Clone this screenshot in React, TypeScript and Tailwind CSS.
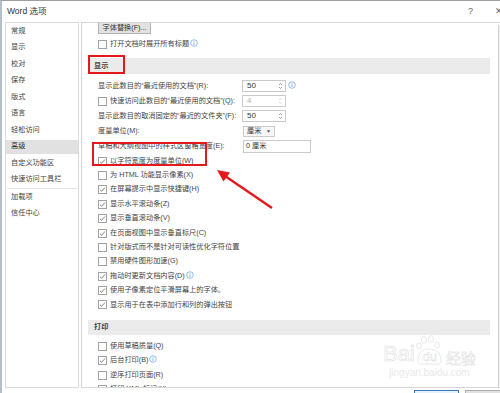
import React from 'react'

const navItems = ['常规', '显示', '校对', '保存', '版式', '语言', '轻松访问', '高级', '自定义功能区', '快速访问工具栏']

const displayChecks: { label: string; checked: boolean; info?: boolean }[] = [
  { label: '以字符宽度为度量单位(W)', checked: true },
  { label: '为 HTML 功能显示像素(X)', checked: false },
  { label: '在屏幕提示中显示快捷键(H)', checked: true },
  { label: '显示水平滚动条(Z)', checked: true },
  { label: '显示垂直滚动条(V)', checked: true },
  { label: '在页面视图中显示垂直标尺(C)', checked: true },
  { label: '针对版式而不是针对可读性优化字符位置', checked: false },
  { label: '禁用硬件图形加速(G)', checked: false },
  { label: '拖动时更新文档内容(D)', checked: true, info: true },
  { label: '使用子像素定位平滑屏幕上的字体。', checked: true },
  { label: '显示用于在表中添加行和列的弹出按钮', checked: true },
]

const printChecks: { label: string; checked: boolean; info?: boolean }[] = [
  { label: '使用草稿质量(Q)', checked: false },
  { label: '后台打印(B)', checked: true, info: true },
  { label: '逆序打印页面(R)', checked: false },
  { label: '打印 XML 标记(X)', checked: false },
]

// 复选框
const Box = ({ checked }: { checked?: boolean }) => (
  <span className="w-[9px] h-[9px] border border-[#a3a3a3] bg-white flex items-center justify-center shrink-0">
    {checked && (
      <svg width="7" height="7" viewBox="0 0 7 7">
        <path d="M1 3.7 L2.7 5.3 L6 1.5" fill="none" stroke="#666" strokeWidth="0.8" />
      </svg>
    )}
  </span>
)

// 信息图标
const Info = ({ className }: { className?: string }) => (
  <svg width="8" height="8" viewBox="0 0 8 8" className={`shrink-0 -mt-[3px] ${className ?? ''}`}>
    <circle cx="4" cy="4" r="3.3" fill="none" stroke="#6aa0d8" strokeWidth="0.7" />
    <line x1="4" y1="3.4" x2="4" y2="6" stroke="#6aa0d8" strokeWidth="0.8" />
    <circle cx="4" cy="2.2" r="0.5" fill="#6aa0d8" />
  </svg>
)

const Spin = ({ value, disabled }: { value: string; disabled?: boolean }) => (
  <div className="w-[44px] h-[12px] border border-[#c9c9c9] bg-white flex items-center justify-between pl-[4px] pr-[2px]">
    <span className={`text-[8px] leading-none ${disabled ? 'text-[#b0b0b0]' : 'text-[#333]'}`}>{value}</span>
    <svg width="5" height="8" viewBox="0 0 5 8">
      <path d="M1 3 L2.5 1.5 L4 3" fill="none" stroke={disabled ? '#c8c8c8' : '#777'} strokeWidth="0.7" />
      <path d="M1 5 L2.5 6.5 L4 5" fill="none" stroke={disabled ? '#c8c8c8' : '#777'} strokeWidth="0.7" />
    </svg>
  </div>
)

const CheckRow = ({ label, checked, info }: { label: string; checked: boolean; info?: boolean }) => (
  <div className="h-[14.4px] shrink-0 flex items-center pl-[10px] gap-[3px]">
    <Box checked={checked} />
    <span className="whitespace-nowrap">{label}</span>
    {info && <Info className="-ml-[2px]" />}
  </div>
)

const Section = ({ title, className }: { title: string; className?: string }) => (
  <div className={`shrink-0 bg-[#ebebeb] flex items-center pl-[6px] font-semibold text-[#444] ${className ?? ''}`}>
    {title}
  </div>
)

export default function App() {
  return (
    <div className="w-[500px] h-[393px] relative overflow-hidden bg-white border-t border-t-[#9e9e9e] border-l-2 border-l-[#b5bfc9] flex flex-col font-['Liberation_Sans','Noto_Sans_CJK_SC',sans-serif] text-[7.2px] text-[#444]">
      {/* 标题栏 */}
      <div className="h-[21px] shrink-0 flex items-center justify-between pl-[5px]">
        <span className="text-[8.5px] text-[#333]">Word 选项</span>
        <div className="flex items-center gap-[22px] text-[#666] text-[9px]">
          <span>?</span>
          <span className="-mr-[3px]">✕</span>
        </div>
      </div>

      <div className="flex h-[366px] shrink-0">
        {/* 左侧导航 */}
        <div className="ml-[3px] w-[74px] shrink-0 border border-[#dadada] flex flex-col">
          {navItems.map(item => (
            <div key={item} className="h-[16.5px] shrink-0 flex items-center">
              <div className={`w-full h-[14px] flex items-center pl-[5px] ${item === '高级' ? 'bg-[#e1e1e1] text-[#333]' : ''}`}>
                {item}
              </div>
            </div>
          ))}
          <div className="h-px bg-[#e4e4e4] mx-[1px] shrink-0" />
          {['加载项', '信任中心'].map(item => (
            <div key={item} className="h-[16.5px] shrink-0 flex items-center pl-[5px]">
              {item}
            </div>
          ))}
        </div>

        {/* 右侧内容 */}
        <div className="ml-[2px] flex-1 flex border-l border-t border-b border-[#d6d6d6] overflow-hidden">
          <div className="flex-1 flex flex-col pl-[6px] pr-[8px] overflow-hidden">
            <div className="-mt-[3px] ml-[10px] w-[53px] h-[14px] shrink-0 bg-[#e1e1e1] border border-[#b4b4b4] flex items-center justify-center pt-[2px] leading-none text-[#333]">
              字体替换(F)...
            </div>
            <div className="mt-[3px]">
              <CheckRow label="打开文档时展开所有标题" checked={false} info />
            </div>

            <Section title="显示" className="mt-[7px] h-[16px]" />

            <div className="mt-[4.5px] flex flex-col">
              <div className="h-[15px] flex items-center pl-[10px]">
                <span className="w-[144px] shrink-0 whitespace-nowrap">显示此数目的“最近使用的文档”(R):</span>
                <Spin value="50" />
                <Info className="ml-[2px]" />
              </div>
              <div className="h-[15px] flex items-center pl-[10px]">
                <div className="w-[144px] shrink-0 flex items-center gap-[3px] whitespace-nowrap">
                  <Box />
                  <span>快速访问此数目的“最近使用的文档”(Q):</span>
                </div>
                <Spin value="4" disabled />
              </div>
              <div className="h-[15px] flex items-center pl-[10px]">
                <span className="w-[144px] shrink-0 whitespace-nowrap">显示此数目的取消固定的“最近的文件夹”(F):</span>
                <Spin value="50" />
              </div>
              <div className="h-[15px] flex items-center pl-[10px]">
                <span className="w-[145px] shrink-0 whitespace-nowrap">度量单位(M):</span>
                <div className="w-[32px] h-[11px] border border-[#cbcbcb] bg-[#f7f7f7] flex items-center justify-between pl-[3px] pr-[3px] text-[#333]">
                  <span>厘米</span>
                  <span className="text-[5px] text-[#555]">▼</span>
                </div>
              </div>
              <div className="h-[15px] flex items-center pl-[10px]">
                <span className="w-[145px] shrink-0 whitespace-nowrap overflow-hidden">草稿和大纲视图中的样式区窗格宽度(E):</span>
                <div className="w-[68px] h-[13px] border border-[#cbcbcb] bg-white flex items-center pl-[2px] text-[#333]">
                  0 厘米
                </div>
              </div>
            </div>

            <div className="flex flex-col">
              {displayChecks.map(c => (
                <CheckRow key={c.label} {...c} />
              ))}
            </div>

            <Section title="打印" className="mt-[8px] h-[15px]" />

            <div className="mt-[4px] flex flex-col">
              {printChecks.map(c => (
                <CheckRow key={c.label} {...c} />
              ))}
            </div>
          </div>
          <div className="w-[2px] shrink-0 mt-[2px] border-l border-[#cfcfcf] bg-[#f2f2f2]" />
        </div>
      </div>

      {/* 底部按钮 */}
      <div className="flex-1 flex items-start justify-end gap-[6px] pt-[2px]">
        <div className="w-[45px] h-[14px] bg-[#e5f1fb] border border-[#3c78b5]" />
        <div className="w-[45px] h-[14px] bg-[#e1e1e1] border border-[#adadad] -mr-[10px]" />
      </div>

      {/* 红色标注 */}
      <div className="absolute left-[86px] top-[54px] w-[37px] h-[19px] border-2 border-[#e3191c]" />
      <div className="absolute left-[90px] top-[141px] w-[115px] h-[24px] border-2 border-[#e3191c]" />
      <svg className="absolute left-0 top-0" width="500" height="393" viewBox="-2 -1 500 393">
        <line x1="268" y1="206" x2="221" y2="174" stroke="#e3191c" strokeWidth="2.4" />
        <polygon points="213,168 226,170.5 219.5,179.5" fill="#e3191c" />
      </svg>

      {/* 水印 */}
      <div className="absolute left-[381px] top-[334px] flex flex-col items-center font-['Liberation_Sans',sans-serif]">
        <div className="flex items-end">
          <span className="text-[22px] leading-none text-white [-webkit-text-stroke:0.6px_#e0e0e0]">Bai</span>
          <div className="relative w-[30px] h-[30px] flex items-end justify-center">
            <svg className="absolute left-0 top-0" width="30" height="30" viewBox="0 0 30 30">
              <ellipse cx="9" cy="5" rx="2.6" ry="3.4" fill="none" stroke="#e2e2e2" strokeWidth="0.8" />
              <ellipse cx="16" cy="4" rx="2.6" ry="3.4" fill="none" stroke="#e2e2e2" strokeWidth="0.8" />
              <ellipse cx="4" cy="11" rx="2.4" ry="3" fill="none" stroke="#e2e2e2" strokeWidth="0.8" />
              <ellipse cx="22" cy="10" rx="2.4" ry="3" fill="none" stroke="#e2e2e2" strokeWidth="0.8" />
              <path d="M3 26 Q3 14 14 14 Q26 14 26 26 Q26 30 20 29 L8 29 Q3 30 3 26 Z" fill="none" stroke="#e2e2e2" strokeWidth="0.8" />
            </svg>
            <span className="relative text-[13px] leading-none mb-[2px] text-white [-webkit-text-stroke:0.5px_#e0e0e0]">du</span>
          </div>
          <span className="text-[15px] leading-none ml-[1px] text-white [-webkit-text-stroke:0.5px_#e0e0e0] font-['Noto_Sans_CJK_SC',sans-serif]">经验</span>
        </div>
        <span className="text-[10px] leading-none mt-[3px] text-[#e8e8e8]">jingyan.baidu.com</span>
      </div>
    </div>
  )
}
